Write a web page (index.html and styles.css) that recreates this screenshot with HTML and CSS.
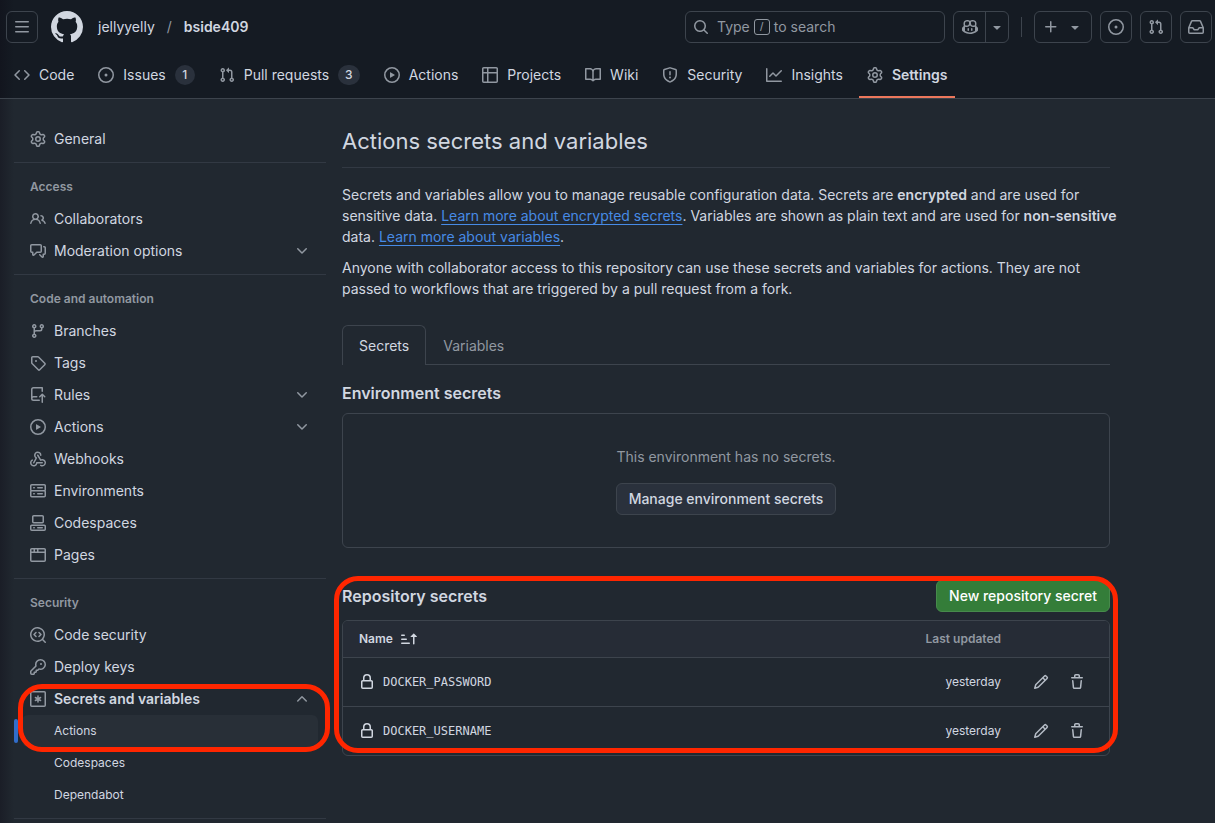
FILE: index.html
```html
<!DOCTYPE html>
<html lang="en">
<head>
    <meta charset="UTF-8">
    <meta name="viewport" content="width=device-width, initial-scale=1.0">
    <title>Actions secrets · jellyyelly/bside409</title>
    <link rel="stylesheet" href="styles.css">
</head>
<body>
    <svg class="sprite" aria-hidden="true">
        <symbol id="i-bars" viewBox="0 0 16 16"><path d="M1 2.75A.75.75 0 0 1 1.75 2h12.5a.75.75 0 0 1 0 1.5H1.75A.75.75 0 0 1 1 2.75Zm0 5A.75.75 0 0 1 1.75 7h12.5a.75.75 0 0 1 0 1.5H1.75A.75.75 0 0 1 1 7.75ZM1.75 12h12.5a.75.75 0 0 1 0 1.5H1.75a.75.75 0 0 1 0-1.5Z"/></symbol>
        <symbol id="i-github" viewBox="0 0 16 16"><path d="M8 0c4.42 0 8 3.58 8 8a8.013 8.013 0 0 1-5.45 7.59c-.4.08-.55-.17-.55-.38 0-.27.01-1.13.01-2.2 0-.75-.25-1.23-.54-1.48 1.78-.2 3.65-.88 3.65-3.95 0-.88-.31-1.59-.82-2.15.08-.2.36-1.02-.08-2.12 0 0-.67-.22-2.2.82-.64-.18-1.32-.27-2-.27-.68 0-1.36.09-2 .27-1.53-1.03-2.2-.82-2.2-.82-.44 1.1-.16 1.92-.08 2.12-.51.56-.82 1.28-.82 2.15 0 3.06 1.86 3.75 3.64 3.95-.23.2-.44.55-.51 1.07-.46.21-1.61.55-2.33-.66-.15-.24-.6-.83-1.23-.82-.67.01-.27.38.01.53.34.19.73.9.82 1.13.16.45.68 1.31 2.69.94 0 .67.01 1.3.01 1.49 0 .21-.15.45-.55.38A7.995 7.995 0 0 1 0 8c0-4.42 3.58-8 8-8Z"/></symbol>
        <symbol id="i-search" viewBox="0 0 16 16"><path d="M10.68 11.74a6 6 0 0 1-7.922-8.982 6 6 0 0 1 8.982 7.922l3.04 3.04a.749.749 0 0 1-.326 1.275.749.749 0 0 1-.734-.215ZM11.5 7a4.499 4.499 0 1 0-8.997 0A4.499 4.499 0 0 0 11.5 7Z"/></symbol>
        <symbol id="i-copilot" viewBox="0 0 16 16"><path d="M7.998 15.035c-4.562 0-7.873-2.914-7.998-3.749V9.338c.085-.628.677-1.686 1.588-2.065.013-.07.024-.143.036-.218.029-.183.06-.384.126-.612-.201-.508-.254-1.084-.254-1.656 0-.87.128-1.769.693-2.484.579-.733 1.494-1.124 2.724-1.261 1.206-.134 2.262.034 2.944.765.05.053.096.108.139.165.044-.057.094-.112.143-.165.682-.731 1.738-.899 2.944-.765 1.23.137 2.145.528 2.724 1.261.566.715.693 1.614.693 2.484 0 .572-.053 1.148-.254 1.656.066.228.098.429.126.612.012.076.024.148.037.218.924.385 1.522 1.471 1.591 2.095v1.872c0 .766-3.351 3.795-8.002 3.795Zm0-1.485c2.28 0 4.584-1.11 5.002-1.433V7.862l-.023-.116c-.49.21-1.075.291-1.727.291-1.146 0-2.059-.327-2.71-.991A3.222 3.222 0 0 1 8 6.303a3.24 3.24 0 0 1-.544.743c-.65.664-1.563.991-2.71.991-.652 0-1.236-.081-1.727-.291l-.023.116v4.255c.419.323 2.722 1.433 5.002 1.433ZM6.762 2.83c-.193-.206-.637-.413-1.682-.297-1.019.113-1.479.404-1.713.7-.247.312-.369.789-.369 1.554 0 .793.129 1.171.308 1.371.162.181.519.379 1.442.379.853 0 1.339-.235 1.638-.54.315-.322.527-.827.617-1.553.117-.935-.037-1.395-.241-1.614Zm4.155-.297c-1.044-.116-1.488.091-1.681.297-.204.219-.359.679-.242 1.614.091.726.303 1.231.618 1.553.299.305.784.54 1.638.54.922 0 1.28-.198 1.442-.379.179-.2.308-.578.308-1.371 0-.765-.123-1.242-.37-1.554-.233-.296-.693-.587-1.713-.7Z"/><path d="M6.25 9.037a.75.75 0 0 1 .75.75v1.501a.75.75 0 0 1-1.5 0V9.787a.75.75 0 0 1 .75-.75Zm4.25.75v1.501a.75.75 0 0 1-1.5 0V9.787a.75.75 0 0 1 1.5 0Z"/></symbol>
        <symbol id="i-triangle" viewBox="0 0 16 16"><path d="m4.427 7.427 3.396 3.396a.25.25 0 0 0 .354 0l3.396-3.396A.25.25 0 0 0 11.396 7H4.604a.25.25 0 0 0-.177.427Z"/></symbol>
        <symbol id="i-plus" viewBox="0 0 16 16"><path d="M7.75 2a.75.75 0 0 1 .75.75V7h4.25a.75.75 0 0 1 0 1.5H8.5v4.25a.75.75 0 0 1-1.5 0V8.5H2.75a.75.75 0 0 1 0-1.5H7V2.75A.75.75 0 0 1 7.75 2Z"/></symbol>
        <symbol id="i-inbox" viewBox="0 0 16 16"><path d="M2.8 2.06A1.75 1.75 0 0 1 4.41 1h7.18c.7 0 1.333.417 1.61 1.06l2.74 6.395c.04.093.06.194.06.295v4.5A1.75 1.75 0 0 1 14.25 15H1.75A1.75 1.75 0 0 1 0 13.25v-4.5c0-.101.02-.202.06-.295Zm1.61.44a.25.25 0 0 0-.23.152L1.887 8H4.75a.75.75 0 0 1 .6.3L6.625 10h2.75l1.275-1.7a.75.75 0 0 1 .6-.3h2.863L11.82 2.652a.25.25 0 0 0-.23-.152Zm10.09 7h-2.875l-1.275 1.7a.75.75 0 0 1-.6.3h-3.5a.75.75 0 0 1-.6-.3L4.375 9.5H1.5v3.75c0 .138.112.25.25.25h12.5a.25.25 0 0 0 .25-.25Z"/></symbol>
        <symbol id="i-code" viewBox="0 0 16 16"><path d="m11.28 3.22 4.25 4.25a.75.75 0 0 1 0 1.06l-4.25 4.25a.749.749 0 0 1-1.275-.326.749.749 0 0 1 .215-.734L13.94 8l-3.72-3.72a.749.749 0 0 1 .326-1.275.749.749 0 0 1 .734.215Zm-6.56 0a.751.751 0 0 1 1.042.018.751.751 0 0 1 .018 1.042L2.06 8l3.72 3.72a.749.749 0 0 1-.326 1.275.749.749 0 0 1-.734-.215L.47 8.53a.75.75 0 0 1 0-1.06Z"/></symbol>
        <symbol id="i-issue" viewBox="0 0 16 16"><path d="M8 9.5a1.5 1.5 0 1 0 0-3 1.5 1.5 0 0 0 0 3Z"/><path d="M8 0a8 8 0 1 1 0 16A8 8 0 0 1 8 0ZM1.5 8a6.5 6.5 0 1 0 13 0 6.5 6.5 0 0 0-13 0Z"/></symbol>
        <symbol id="i-pr" viewBox="0 0 16 16"><path d="M1.5 3.25a2.25 2.25 0 1 1 3 2.122v5.256a2.251 2.251 0 1 1-1.5 0V5.372A2.25 2.25 0 0 1 1.5 3.25Zm5.677-.177L9.573.677A.25.25 0 0 1 10 .854V2.5h1A2.5 2.5 0 0 1 13.5 5v5.628a2.251 2.251 0 1 1-1.5 0V5a1 1 0 0 0-1-1h-1v1.646a.25.25 0 0 1-.427.177L7.177 3.427a.25.25 0 0 1 0-.354ZM3.75 2.5a.75.75 0 1 0 0 1.5.75.75 0 0 0 0-1.5Zm0 9.5a.75.75 0 1 0 0 1.5.75.75 0 0 0 0-1.5Zm8.25.75a.75.75 0 1 0 1.5 0 .75.75 0 0 0-1.5 0Z"/></symbol>
        <symbol id="i-play" viewBox="0 0 16 16"><path d="M8 0a8 8 0 1 1 0 16A8 8 0 0 1 8 0ZM1.5 8a6.5 6.5 0 1 0 13 0 6.5 6.5 0 0 0-13 0Zm4.879-2.773 4.264 2.559a.25.25 0 0 1 0 .428l-4.264 2.559A.25.25 0 0 1 6 10.559V5.442a.25.25 0 0 1 .379-.215Z"/></symbol>
        <symbol id="i-table" viewBox="0 0 16 16"><path d="M0 1.75C0 .784.784 0 1.75 0h12.5C15.216 0 16 .784 16 1.75v12.5A1.75 1.75 0 0 1 14.25 16H1.75A1.75 1.75 0 0 1 0 14.25ZM6.5 6.5v8h7.75a.25.25 0 0 0 .25-.25V6.5Zm8-1.5V1.75a.25.25 0 0 0-.25-.25H6.5V5Zm-13 1.5v7.75c0 .138.112.25.25.25H5v-8ZM5 5V1.5H1.75a.25.25 0 0 0-.25.25V5Z"/></symbol>
        <symbol id="i-book" viewBox="0 0 16 16"><path d="M0 1.75A.75.75 0 0 1 .75 1h4.253c1.227 0 2.317.59 3 1.501A3.743 3.743 0 0 1 11.006 1h4.245a.75.75 0 0 1 .75.75v10.5a.75.75 0 0 1-.75.75h-4.507a2.25 2.25 0 0 0-1.591.659l-.622.621a.75.75 0 0 1-1.06 0l-.622-.621A2.25 2.25 0 0 0 5.258 13H.75a.75.75 0 0 1-.75-.75Zm7.251 10.324.004-5.073-.002-2.253A2.25 2.25 0 0 0 5.003 2.5H1.5v9h3.757a3.75 3.75 0 0 1 1.994.574ZM8.755 4.75l-.004 7.322a3.752 3.752 0 0 1 1.992-.572H14.5v-9h-3.495a2.25 2.25 0 0 0-2.25 2.25Z"/></symbol>
        <symbol id="i-shield" viewBox="0 0 16 16"><path d="M7.467.133a1.748 1.748 0 0 1 1.066 0l5.25 1.68A1.75 1.75 0 0 1 15 3.48V7c0 1.566-.32 3.182-1.303 4.682-.983 1.498-2.585 2.813-5.032 3.855a1.697 1.697 0 0 1-1.33 0c-2.447-1.042-4.049-2.357-5.032-3.855C1.32 10.182 1 8.566 1 7V3.48a1.755 1.755 0 0 1 1.217-1.667Zm.61 1.429a.25.25 0 0 0-.153 0l-5.25 1.68a.25.25 0 0 0-.174.238V7c0 1.358.275 2.666 1.057 3.86.784 1.194 2.121 2.34 4.366 3.297a.196.196 0 0 0 .154 0c2.245-.956 3.582-2.104 4.366-3.298C13.225 9.666 13.5 8.36 13.5 7V3.48a.251.251 0 0 0-.174-.237l-5.25-1.68ZM8.75 4.75v3a.75.75 0 0 1-1.5 0v-3a.75.75 0 0 1 1.5 0ZM9 10.5a1 1 0 1 1-2 0 1 1 0 0 1 2 0Z"/></symbol>
        <symbol id="i-graph" viewBox="0 0 16 16"><path d="M1.5 1.75V13.5h13.75a.75.75 0 0 1 0 1.5H.75a.75.75 0 0 1-.75-.75V1.75a.75.75 0 0 1 1.5 0Zm14.28 2.53-5.25 5.25a.75.75 0 0 1-1.06 0L7 7.06 4.28 9.78a.751.751 0 0 1-1.042-.018.751.751 0 0 1-.018-1.042l3.25-3.25a.75.75 0 0 1 1.06 0L10 7.94l4.72-4.72a.751.751 0 0 1 1.042.018.751.751 0 0 1 .018 1.042Z"/></symbol>
        <symbol id="i-gear" viewBox="0 0 16 16"><path d="M8 0a8.2 8.2 0 0 1 .701.031C9.444.095 9.99.645 10.16 1.29l.288 1.107c.018.066.079.158.212.224.231.114.454.243.668.386.123.082.233.09.299.071l1.103-.303c.644-.176 1.392.021 1.82.63.27.385.506.792.704 1.218.315.675.111 1.422-.364 1.891l-.814.806c-.049.048-.098.147-.088.294.016.257.016.515 0 .772-.01.147.038.246.088.294l.814.806c.475.469.679 1.216.364 1.891a7.977 7.977 0 0 1-.704 1.217c-.428.61-1.176.807-1.82.63l-1.102-.302c-.067-.019-.177-.011-.3.071a5.909 5.909 0 0 1-.668.386c-.133.066-.194.158-.211.224l-.29 1.106c-.168.646-.715 1.196-1.458 1.26a8.006 8.006 0 0 1-1.402 0c-.743-.064-1.289-.614-1.458-1.26l-.289-1.106c-.018-.066-.079-.158-.212-.224a5.738 5.738 0 0 1-.668-.386c-.123-.082-.233-.09-.299-.071l-1.103.303c-.644.176-1.392-.021-1.82-.63a8.12 8.12 0 0 1-.704-1.218c-.315-.675-.111-1.422.363-1.891l.815-.806c.05-.048.098-.147.088-.294a6.214 6.214 0 0 1 0-.772c.01-.147-.038-.246-.088-.294l-.815-.806C.635 6.045.431 5.298.746 4.623a7.92 7.92 0 0 1 .704-1.217c.428-.61 1.176-.807 1.82-.63l1.102.302c.067.019.177.011.3-.071.214-.143.437-.272.668-.386.133-.066.194-.158.211-.224l.29-1.106C6.009.645 6.556.095 7.299.03 7.53.01 7.764 0 8 0Zm-.571 1.525c-.036.003-.108.036-.137.146l-.289 1.105c-.147.561-.549.967-.998 1.189-.173.086-.34.183-.5.29-.417.278-.97.423-1.529.27l-1.103-.303c-.109-.03-.175.016-.195.045-.22.312-.412.644-.573.99-.014.031-.021.11.059.19l.815.806c.411.406.562.957.53 1.456a4.709 4.709 0 0 0 0 .582c.032.499-.119 1.05-.53 1.456l-.815.806c-.081.08-.073.159-.059.19.162.346.353.677.573.989.02.03.085.076.195.046l1.102-.303c.56-.153 1.113-.008 1.53.27.161.107.328.204.501.29.447.222.85.629.997 1.189l.289 1.105c.029.109.101.143.137.146a6.6 6.6 0 0 0 1.142 0c.036-.003.108-.036.137-.146l.289-1.105c.147-.561.549-.967.998-1.189.173-.086.34-.183.5-.29.417-.278.97-.423 1.529-.27l1.103.303c.109.029.175-.016.195-.045.22-.313.411-.644.573-.99.014-.031.021-.11-.059-.19l-.815-.806c-.411-.406-.562-.957-.53-1.456a4.709 4.709 0 0 0 0-.582c-.032-.499.119-1.05.53-1.456l.815-.806c.081-.08.073-.159.059-.19a6.464 6.464 0 0 0-.573-.989c-.02-.03-.085-.076-.195-.046l-1.102.303c-.56.153-1.113.008-1.53-.27a4.44 4.44 0 0 0-.501-.29c-.447-.222-.85-.629-.997-1.189l-.289-1.105c-.029-.11-.101-.143-.137-.146a6.6 6.6 0 0 0-1.142 0ZM11 8a3 3 0 1 1-6 0 3 3 0 0 1 6 0ZM9.5 8a1.5 1.5 0 1 0-3.001.001A1.5 1.5 0 0 0 9.5 8Z"/></symbol>
        <symbol id="i-people" viewBox="0 0 16 16"><path d="M2 5.5a3.5 3.5 0 1 1 5.898 2.549 5.508 5.508 0 0 1 3.034 4.084.75.75 0 1 1-1.482.235 4 4 0 0 0-7.9 0 .75.75 0 0 1-1.482-.236A5.507 5.507 0 0 1 3.102 8.05 3.493 3.493 0 0 1 2 5.5ZM11 4a3.001 3.001 0 0 1 2.22 5.018 5.01 5.01 0 0 1 2.56 3.012.749.749 0 0 1-.885.954.752.752 0 0 1-.549-.514 3.507 3.507 0 0 0-2.522-2.372.75.75 0 0 1-.574-.73v-.352a.75.75 0 0 1 .416-.672A1.5 1.5 0 0 0 11 5.5.75.75 0 0 1 11 4Zm-5.5-.5a2 2 0 1 0-.001 3.999A2 2 0 0 0 5.5 3.5Z"/></symbol>
        <symbol id="i-discussion" viewBox="0 0 16 16"><path d="M1.75 1h8.5c.966 0 1.75.784 1.75 1.75v5.5A1.75 1.75 0 0 1 10.25 10H7.061l-2.574 2.573A1.458 1.458 0 0 1 2 11.543V10h-.25A1.75 1.75 0 0 1 0 8.25v-5.5C0 1.784.784 1 1.75 1ZM1.5 2.75v5.5c0 .138.112.25.25.25h1a.75.75 0 0 1 .75.75v2.19l2.72-2.72a.749.749 0 0 1 .53-.22h3.5a.25.25 0 0 0 .25-.25v-5.5a.25.25 0 0 0-.25-.25h-8.5a.25.25 0 0 0-.25.25Zm13 2a.25.25 0 0 0-.25-.25h-.5a.75.75 0 0 1 0-1.5h.5c.966 0 1.75.784 1.75 1.75v5.5A1.75 1.75 0 0 1 14.25 12H14v1.543a1.458 1.458 0 0 1-2.487 1.03L9.22 12.28a.749.749 0 0 1 .326-1.275.749.749 0 0 1 .734.215l2.22 2.22v-2.19a.75.75 0 0 1 .75-.75h1a.25.25 0 0 0 .25-.25Z"/></symbol>
        <symbol id="i-branch" viewBox="0 0 16 16"><path d="M9.5 3.25a2.25 2.25 0 1 1 3 2.122V6A2.5 2.5 0 0 1 10 8.5H6a1 1 0 0 0-1 1v1.128a2.251 2.251 0 1 1-1.5 0V5.372a2.25 2.25 0 1 1 1.5 0v1.836A2.493 2.493 0 0 1 6 7h4a1 1 0 0 0 1-1v-.628A2.25 2.25 0 0 1 9.5 3.25Zm-6 0a.75.75 0 1 0 1.5 0 .75.75 0 0 0-1.5 0Zm8.25-.75a.75.75 0 1 0 0 1.5.75.75 0 0 0 0-1.5ZM4.25 12a.75.75 0 1 0 0 1.5.75.75 0 0 0 0-1.5Z"/></symbol>
        <symbol id="i-tag" viewBox="0 0 16 16"><path d="M1 7.775V2.75C1 1.784 1.784 1 2.75 1h5.025c.464 0 .91.184 1.238.513l6.25 6.25a1.75 1.75 0 0 1 0 2.474l-5.026 5.026a1.75 1.75 0 0 1-2.474 0l-6.25-6.25A1.752 1.752 0 0 1 1 7.775Zm1.5 0c0 .066.026.13.073.177l6.25 6.25a.25.25 0 0 0 .354 0l5.025-5.025a.25.25 0 0 0 0-.354l-6.25-6.25a.25.25 0 0 0-.177-.073H2.75a.25.25 0 0 0-.25.25ZM6 5a1 1 0 1 1 0 2 1 1 0 0 1 0-2Z"/></symbol>
        <symbol id="i-rules" viewBox="0 0 16 16"><path d="M1 2.5A2.5 2.5 0 0 1 3.5 0h8.75a.75.75 0 0 1 .75.75v3.5a.75.75 0 0 1-1.5 0V1.5h-8a1 1 0 0 0-1 1v6.708A2.493 2.493 0 0 1 3.5 9h3.25a.75.75 0 0 1 0 1.5H3.5a1 1 0 0 0 0 2h5.75a.75.75 0 0 1 0 1.5H3.5A2.5 2.5 0 0 1 1 11.5Zm13.23 7.79h-.001l-1.224-1.224v6.184a.75.75 0 0 1-1.5 0V9.066L10.28 10.29a.75.75 0 0 1-1.06-1.061l2.505-2.504a.75.75 0 0 1 1.06 0L15.29 9.23a.751.751 0 0 1-.018 1.042.751.751 0 0 1-1.042.018Z"/></symbol>
        <symbol id="i-webhook" viewBox="0 0 16 16"><path d="M5.5 4.25a2.25 2.25 0 0 1 4.5 0 .75.75 0 0 0 1.5 0 3.75 3.75 0 1 0-6.14 2.889l-2.272 4.258a.75.75 0 0 0 1.324.706L7 7.25a.75.75 0 0 0-.309-1.015A2.25 2.25 0 0 1 5.5 4.25Z"/><path d="M7.364 3.607a.75.75 0 0 1 1.03.257l2.608 4.349a3.75 3.75 0 1 1-.628 6.785.75.75 0 0 1 .752-1.299 2.25 2.25 0 1 0-.033-3.88.75.75 0 0 1-1.03-.256L7.107 4.636a.75.75 0 0 1 .257-1.03Z"/><path d="M2.9 8.776A.75.75 0 0 1 2.625 9.8 2.25 2.25 0 1 0 6 11.75a.75.75 0 0 1 .75-.751h5.5a.75.75 0 0 1 0 1.5H7.425a3.751 3.751 0 1 1-5.55-3.998.75.75 0 0 1 1.024.274Z"/></symbol>
        <symbol id="i-server" viewBox="0 0 16 16"><path d="M1.75 1h12.5c.966 0 1.75.784 1.75 1.75v4c0 .372-.116.717-.314 1 .198.283.314.628.314 1v4a1.75 1.75 0 0 1-1.75 1.75H1.75A1.75 1.75 0 0 1 0 12.75v-4c0-.358.109-.707.314-1a1.739 1.739 0 0 1-.314-1v-4C0 1.784.784 1 1.75 1ZM1.5 2.75v4c0 .138.112.25.25.25h12.5a.25.25 0 0 0 .25-.25v-4a.25.25 0 0 0-.25-.25H1.75a.25.25 0 0 0-.25.25Zm.25 5.75a.25.25 0 0 0-.25.25v4c0 .138.112.25.25.25h12.5a.25.25 0 0 0 .25-.25v-4a.25.25 0 0 0-.25-.25ZM7 4.75A.75.75 0 0 1 7.75 4h4.5a.75.75 0 0 1 0 1.5h-4.5A.75.75 0 0 1 7 4.75ZM7.75 10h4.5a.75.75 0 0 1 0 1.5h-4.5a.75.75 0 0 1 0-1.5ZM3 4.75A.75.75 0 0 1 3.75 4h.5a.75.75 0 0 1 0 1.5h-.5A.75.75 0 0 1 3 4.75ZM3.75 10h.5a.75.75 0 0 1 0 1.5h-.5a.75.75 0 0 1 0-1.5Z"/></symbol>
        <symbol id="i-codespaces" viewBox="0 0 16 16"><path d="M0 11.25c0-.966.784-1.75 1.75-1.75h12.5c.966 0 1.75.784 1.75 1.75v3A1.75 1.75 0 0 1 14.25 16H1.75A1.75 1.75 0 0 1 0 14.25Zm2-9.5C2 .784 2.784 0 3.75 0h8.5C13.216 0 14 .784 14 1.75v5a1.75 1.75 0 0 1-1.75 1.75h-8.5A1.75 1.75 0 0 1 2 6.75Zm1.75-.25a.25.25 0 0 0-.25.25v5c0 .138.112.25.25.25h8.5a.25.25 0 0 0 .25-.25v-5a.25.25 0 0 0-.25-.25Zm-2 9.5a.25.25 0 0 0-.25.25v3c0 .138.112.25.25.25h12.5a.25.25 0 0 0 .25-.25v-3a.25.25 0 0 0-.25-.25Z"/><path d="M7 12.75a.75.75 0 0 1 .75-.75h4.5a.75.75 0 0 1 0 1.5h-4.5a.75.75 0 0 1-.75-.75Zm-4 0a.75.75 0 0 1 .75-.75h.5a.75.75 0 0 1 0 1.5h-.5a.75.75 0 0 1-.75-.75Z"/></symbol>
        <symbol id="i-browser" viewBox="0 0 16 16"><path d="M0 2.75C0 1.784.784 1 1.75 1h12.5c.966 0 1.75.784 1.75 1.75v10.5A1.75 1.75 0 0 1 14.25 15H1.75A1.75 1.75 0 0 1 0 13.25ZM14.5 6h-13v7.25c0 .138.112.25.25.25h12.5a.25.25 0 0 0 .25-.25Zm-6-3.5v2h6V2.75a.25.25 0 0 0-.25-.25ZM5 2.5v2h2v-2Zm-3.25 0a.25.25 0 0 0-.25.25V4.5h2v-2Z"/></symbol>
        <symbol id="i-codescan" viewBox="0 0 16 16"><path d="M8.47 4.97a.75.75 0 0 0 0 1.06L9.94 7.5 8.47 8.97a.75.75 0 1 0 1.06 1.06l2-2a.75.75 0 0 0 0-1.06l-2-2a.75.75 0 0 0-1.06 0ZM6.53 6.03a.75.75 0 0 0-1.06-1.06l-2 2a.75.75 0 0 0 0 1.06l2 2a.75.75 0 1 0 1.06-1.06L5.06 7.5l1.47-1.47Z"/><path d="M12.246 13.307a7.501 7.501 0 1 1 1.06-1.06l2.474 2.473a.749.749 0 0 1-.326 1.275.749.749 0 0 1-.734-.215ZM1.5 7.5a6.002 6.002 0 0 0 3.608 5.504 6.002 6.002 0 0 0 6.486-1.117.748.748 0 0 1 .292-.293A6 6 0 1 0 1.5 7.5Z"/></symbol>
        <symbol id="i-key" viewBox="0 0 16 16"><path d="M10.5 0a5.499 5.499 0 1 1-1.288 10.848l-.932.932a.749.749 0 0 1-.53.22H7v.75a.749.749 0 0 1-.22.53l-.5.5a.749.749 0 0 1-.53.22H5v.75a.749.749 0 0 1-.22.53l-.5.5a.749.749 0 0 1-.53.22h-2A1.75 1.75 0 0 1 0 14.25v-2c0-.199.079-.389.22-.53l4.932-4.932A5.5 5.5 0 0 1 10.5 0Zm-4 5.5c-.001.431.069.86.205 1.269a.75.75 0 0 1-.181.768L1.5 12.56v1.69c0 .138.112.25.25.25h1.69l.06-.06v-1.19a.75.75 0 0 1 .75-.75h1.19l.06-.06v-1.19a.75.75 0 0 1 .75-.75h1.19l1.023-1.025a.75.75 0 0 1 .768-.18A4 4 0 1 0 6.5 5.5ZM11 6a1 1 0 1 1 0-2 1 1 0 0 1 0 2Z"/></symbol>
        <symbol id="i-asterisk" viewBox="0 0 16 16"><g fill="none" stroke="currentColor" stroke-width="1.5" stroke-linecap="round"><rect x=".75" y=".75" width="14.5" height="14.5" rx="1"/><path d="M8 5v6M5.4 6.5l5.2 3M10.6 6.5l-5.2 3"/></g></symbol>
        <symbol id="i-down" viewBox="0 0 16 16"><path d="M12.78 5.22a.749.749 0 0 1 0 1.06l-4.25 4.25a.749.749 0 0 1-1.06 0L3.22 6.28a.749.749 0 1 1 1.06-1.06L8 8.939l3.72-3.719a.749.749 0 0 1 1.06 0Z"/></symbol>
        <symbol id="i-up" viewBox="0 0 16 16"><path d="M3.22 10.53a.749.749 0 0 1 0-1.06l4.25-4.25a.749.749 0 0 1 1.06 0l4.25 4.25a.749.749 0 1 1-1.06 1.06L8 6.811 4.28 10.53a.749.749 0 0 1-1.06 0Z"/></symbol>
        <symbol id="i-sort" viewBox="0 0 16 16"><path d="m12.927 2.573 3 3A.25.25 0 0 1 15.75 6H13.5v6.75a.75.75 0 0 1-1.5 0V6H9.75a.25.25 0 0 1-.177-.427l3-3a.25.25 0 0 1 .354 0ZM0 12.25a.75.75 0 0 1 .75-.75h7.5a.75.75 0 0 1 0 1.5H.75a.75.75 0 0 1-.75-.75Zm0-4a.75.75 0 0 1 .75-.75h4.5a.75.75 0 0 1 0 1.5H.75A.75.75 0 0 1 0 8.25Zm0-4a.75.75 0 0 1 .75-.75h2.5a.75.75 0 0 1 0 1.5H.75A.75.75 0 0 1 0 4.25Z"/></symbol>
        <symbol id="i-lock" viewBox="0 0 16 16"><path d="M4 4a4 4 0 0 1 8 0v2h.25c.966 0 1.75.784 1.75 1.75v5.5A1.75 1.75 0 0 1 12.25 15h-8.5A1.75 1.75 0 0 1 2 13.25v-5.5C2 6.784 2.784 6 3.75 6H4Zm8.25 3.5h-8.5a.25.25 0 0 0-.25.25v5.5c0 .138.112.25.25.25h8.5a.25.25 0 0 0 .25-.25v-5.5a.25.25 0 0 0-.25-.25ZM10.5 6V4a2.5 2.5 0 1 0-5 0v2Z"/></symbol>
        <symbol id="i-pencil" viewBox="0 0 16 16"><path d="M11.013 1.427a1.75 1.75 0 0 1 2.474 0l1.086 1.086a1.75 1.75 0 0 1 0 2.474l-8.61 8.61c-.21.21-.47.364-.756.445l-3.251.93a.75.75 0 0 1-.927-.928l.929-3.25c.081-.286.235-.547.445-.758l8.61-8.61Zm.176 4.823L9.75 4.81l-6.286 6.287a.253.253 0 0 0-.064.108l-.558 1.953 1.953-.558a.253.253 0 0 0 .108-.064Zm1.238-3.763a.25.25 0 0 0-.354 0L10.811 3.75l1.439 1.44 1.263-1.263a.25.25 0 0 0 0-.354Z"/></symbol>
        <symbol id="i-trash" viewBox="0 0 16 16"><path d="M11 1.75V3h2.25a.75.75 0 0 1 0 1.5H2.75a.75.75 0 0 1 0-1.5H5V1.75C5 .784 5.784 0 6.75 0h2.5C10.216 0 11 .784 11 1.75ZM4.496 6.675l.66 6.6a.25.25 0 0 0 .249.225h5.19a.25.25 0 0 0 .249-.225l.66-6.6a.75.75 0 0 1 1.492.149l-.66 6.6A1.748 1.748 0 0 1 10.595 15h-5.19a1.75 1.75 0 0 1-1.741-1.575l-.66-6.6a.75.75 0 1 1 1.492-.15ZM6.5 1.75V3h3V1.75a.25.25 0 0 0-.25-.25h-2.5a.25.25 0 0 0-.25.25Z"/></symbol>
    </svg>

    <header class="header">
        <div class="header-bar">
            <button type="button" class="header-button" aria-label="Open menu"><svg class="icon"><use href="#i-bars"/></svg></button>
            <a href="#" class="logo" aria-label="Homepage"><svg class="logo-mark"><use href="#i-github"/></svg></a>
            <nav class="crumbs" aria-label="Breadcrumbs">
                <a href="#">jellyyelly</a>
                <span class="crumb-slash">/</span>
                <a href="#" class="crumb-current">bside409</a>
            </nav>
            <div class="header-actions">
                <button type="button" class="search">
                    <svg class="icon"><use href="#i-search"/></svg>
                    <span class="search-text">Type <kbd>/</kbd> to search</span>
                </button>
                <div class="split-button">
                    <button type="button" aria-label="Chat with Copilot"><svg class="icon"><use href="#i-copilot"/></svg></button>
                    <button type="button" class="split-caret" aria-label="Open Copilot menu"><svg class="icon"><use href="#i-triangle"/></svg></button>
                </div>
                <span class="header-divider"></span>
                <button type="button" class="header-button create-button" aria-label="Create new"><svg class="icon"><use href="#i-plus"/></svg><svg class="icon"><use href="#i-triangle"/></svg></button>
                <a href="#" class="header-button" aria-label="Your issues"><svg class="icon"><use href="#i-issue"/></svg></a>
                <a href="#" class="header-button" aria-label="Your pull requests"><svg class="icon"><use href="#i-pr"/></svg></a>
                <a href="#" class="header-button" aria-label="Notifications"><svg class="icon"><use href="#i-inbox"/></svg></a>
            </div>
        </div>
        <nav class="repo-nav" aria-label="Repository">
            <a href="#"><svg class="icon"><use href="#i-code"/></svg>Code</a>
            <a href="#"><svg class="icon"><use href="#i-issue"/></svg>Issues <span class="counter">1</span></a>
            <a href="#"><svg class="icon"><use href="#i-pr"/></svg>Pull requests <span class="counter">3</span></a>
            <a href="#"><svg class="icon"><use href="#i-play"/></svg>Actions</a>
            <a href="#"><svg class="icon"><use href="#i-table"/></svg>Projects</a>
            <a href="#"><svg class="icon"><use href="#i-book"/></svg>Wiki</a>
            <a href="#"><svg class="icon"><use href="#i-shield"/></svg>Security</a>
            <a href="#"><svg class="icon"><use href="#i-graph"/></svg>Insights</a>
            <a href="#" class="selected" aria-current="page"><svg class="icon"><use href="#i-gear"/></svg>Settings</a>
        </nav>
    </header>

    <div class="layout">
        <nav class="sidebar" aria-label="Settings">
            <div class="group">
                <a href="#" class="item"><svg class="icon"><use href="#i-gear"/></svg>General</a>
            </div>
            <div class="group">
                <h3>Access</h3>
                <a href="#" class="item"><svg class="icon"><use href="#i-people"/></svg>Collaborators</a>
                <button type="button" class="item"><svg class="icon"><use href="#i-discussion"/></svg>Moderation options<svg class="icon chevron"><use href="#i-down"/></svg></button>
            </div>
            <div class="group">
                <h3>Code and automation</h3>
                <a href="#" class="item"><svg class="icon"><use href="#i-branch"/></svg>Branches</a>
                <a href="#" class="item"><svg class="icon"><use href="#i-tag"/></svg>Tags</a>
                <button type="button" class="item"><svg class="icon"><use href="#i-rules"/></svg>Rules<svg class="icon chevron"><use href="#i-down"/></svg></button>
                <button type="button" class="item"><svg class="icon"><use href="#i-play"/></svg>Actions<svg class="icon chevron"><use href="#i-down"/></svg></button>
                <a href="#" class="item"><svg class="icon"><use href="#i-webhook"/></svg>Webhooks</a>
                <a href="#" class="item"><svg class="icon"><use href="#i-server"/></svg>Environments</a>
                <a href="#" class="item"><svg class="icon"><use href="#i-codespaces"/></svg>Codespaces</a>
                <a href="#" class="item"><svg class="icon"><use href="#i-browser"/></svg>Pages</a>
            </div>
            <div class="group">
                <h3>Security</h3>
                <a href="#" class="item"><svg class="icon"><use href="#i-codescan"/></svg>Code security</a>
                <a href="#" class="item"><svg class="icon"><use href="#i-key"/></svg>Deploy keys</a>
                <div class="marked">
                    <button type="button" class="item item-open"><svg class="icon"><use href="#i-asterisk"/></svg>Secrets and variables<svg class="icon chevron"><use href="#i-up"/></svg></button>
                    <a href="#" class="item sub-item active" aria-current="page">Actions</a>
                    <div class="mark mark-sidebar"></div>
                </div>
                <a href="#" class="item sub-item">Codespaces</a>
                <a href="#" class="item sub-item">Dependabot</a>
            </div>
            <div class="group"></div>
        </nav>

        <main class="content">
            <h1>Actions secrets and variables</h1>
            <div class="intro">
                <p>Secrets and variables allow you to manage reusable configuration data. Secrets are <strong>encrypted</strong> and are used for sensitive data. <a href="#">Learn more about encrypted secrets</a>. Variables are shown as plain text and are used for <strong>non-sensitive</strong> data. <a href="#">Learn more about variables</a>.</p>
                <p>Anyone with collaborator access to this repository can use these secrets and variables for actions. They are not passed to workflows that are triggered by a pull request from a fork.</p>
            </div>
            <nav class="tabs" aria-label="Secrets and variables">
                <a href="#" class="tab selected" aria-current="page">Secrets</a>
                <a href="#" class="tab">Variables</a>
            </nav>

            <section>
                <h2>Environment secrets</h2>
                <div class="blankslate">
                    <p>This environment has no secrets.</p>
                    <button type="button" class="btn">Manage environment secrets</button>
                </div>
            </section>

            <section class="marked repo-secrets">
                <div class="section-head">
                    <h2>Repository secrets</h2>
                    <a href="#" class="btn btn-primary">New repository secret</a>
                </div>
                <div class="table-box">
                    <table>
                        <thead>
                            <tr>
                                <th class="col-name"><button type="button" class="sort">Name<svg class="icon"><use href="#i-sort"/></svg></button></th>
                                <th class="col-date">Last updated</th>
                                <th class="col-actions"></th>
                            </tr>
                        </thead>
                        <tbody>
                            <tr>
                                <td class="col-name"><div class="secret"><svg class="icon"><use href="#i-lock"/></svg><code>DOCKER_PASSWORD</code></div></td>
                                <td class="col-date">yesterday</td>
                                <td class="col-actions">
                                    <div class="row-actions">
                                        <button type="button" aria-label="Edit DOCKER_PASSWORD"><svg class="icon"><use href="#i-pencil"/></svg></button>
                                        <button type="button" aria-label="Remove DOCKER_PASSWORD"><svg class="icon"><use href="#i-trash"/></svg></button>
                                    </div>
                                </td>
                            </tr>
                            <tr>
                                <td class="col-name"><div class="secret"><svg class="icon"><use href="#i-lock"/></svg><code>DOCKER_USERNAME</code></div></td>
                                <td class="col-date">yesterday</td>
                                <td class="col-actions">
                                    <div class="row-actions">
                                        <button type="button" aria-label="Edit DOCKER_USERNAME"><svg class="icon"><use href="#i-pencil"/></svg></button>
                                        <button type="button" aria-label="Remove DOCKER_USERNAME"><svg class="icon"><use href="#i-trash"/></svg></button>
                                    </div>
                                </td>
                            </tr>
                        </tbody>
                    </table>
                </div>
                <div class="mark mark-table"></div>
            </section>
        </main>
    </div>
</body>
</html>
```

FILE: styles.css
```css
* {
    box-sizing: border-box;
}
body {
    margin: 0;
    min-height: 100vh;
    font-family: Inter, "Liberation Sans", sans-serif;
    font-size: 14px;
    line-height: 20px;
    color: #d1d7e0;
    background: #212830 linear-gradient(to right, rgba(20, 20, 30, 0.5), transparent 14px);
}
a {
    color: inherit;
    text-decoration: none;
}
button {
    margin: 0;
    padding: 0;
    font: inherit;
    color: inherit;
    background: none;
    border: none;
    cursor: pointer;
}
h1, h2, h3, p {
    margin: 0;
}
.sprite {
    display: none;
}
.icon {
    width: 16px;
    height: 16px;
    flex-shrink: 0;
    fill: currentColor;
    color: #9198a1;
}

/* header */
.header {
    background: #151b23 linear-gradient(to right, rgba(15, 15, 25, 0.5), transparent 14px);
    border-bottom: 1px solid #3d444d;
}
.header-bar {
    display: flex;
    align-items: center;
    padding: 11px 3px 11px 6px;
}
.header-button {
    display: flex;
    align-items: center;
    justify-content: center;
    width: 32px;
    height: 32px;
    border: 1px solid #3d444d;
    border-radius: 6px;
}
.create-button {
    width: 58px;
    gap: 8px;
}
.logo {
    display: flex;
    margin: 0 8px 0 13px;
}
.logo-mark {
    width: 32px;
    height: 32px;
    fill: #d1d7e0;
}
.crumbs {
    display: flex;
    padding-left: 7px;
    gap: 12px;
}
.crumb-slash {
    color: #9198a1;
}
.crumb-current {
    font-weight: 600;
}
.header-actions {
    display: flex;
    align-items: center;
    gap: 8px;
    margin-left: auto;
}
.search {
    display: flex;
    align-items: center;
    gap: 8px;
    width: 260px;
    height: 32px;
    padding: 0 7px;
    color: #9198a1;
    border: 1px solid #3d444d;
    border-radius: 6px;
}
.search-text {
    display: flex;
    align-items: center;
    gap: 4px;
}
.search kbd {
    width: 16px;
    height: 16px;
    font: 12px/14px "Liberation Sans", sans-serif;
    text-align: center;
    border: 1px solid #9198a1;
    border-radius: 3px;
}
.split-button {
    display: flex;
    height: 32px;
    border: 1px solid #3d444d;
    border-radius: 6px;
}
.split-button button {
    display: flex;
    align-items: center;
    justify-content: center;
    width: 31px;
}
.split-button .split-caret {
    width: 23px;
    border-left: 1px solid #3d444d;
}
.header-divider {
    width: 1px;
    height: 20px;
    margin: 0 4px;
    background: #3d444d;
}
.repo-nav {
    display: flex;
    gap: 8px;
    padding: 0 6px;
}
.repo-nav a {
    display: flex;
    align-items: center;
    gap: 9px;
    height: 44px;
    padding: 0 8px 2px;
    white-space: nowrap;
}
.repo-nav .selected {
    padding-bottom: 0;
    font-weight: 600;
    border-bottom: 2px solid #ec775c;
}
.counter {
    min-width: 20px;
    height: 20px;
    padding: 0 7px;
    font-size: 12px;
    line-height: 20px;
    font-weight: 500;
    text-align: center;
    background: #2a313c;
    border-radius: 10px;
}

/* page columns */
.layout {
    display: flex;
    gap: 16px;
    padding: 0 16px 0 14px;
}
.sidebar {
    width: 312px;
    flex-shrink: 0;
    padding-top: 24px;
}
.group + .group {
    margin-top: 7px;
    padding-top: 8px;
    border-top: 1px solid #323943;
}
.group:empty {
    padding: 0;
}
.group h3 {
    padding: 0 16px;
    font-size: 12px;
    line-height: 32px;
    font-weight: 600;
    color: #9198a1;
}
.item {
    display: flex;
    align-items: center;
    gap: 8px;
    width: 100%;
    height: 32px;
    padding: 0 16px;
    text-align: left;
}
.item-open {
    font-weight: 600;
}
.chevron {
    margin-left: auto;
}
.sub-item {
    padding-left: 40px;
    font-size: 12px;
}
.active {
    position: relative;
    width: auto;
    margin: 0 8px;
    padding-left: 32px;
    background: #282f37;
    border-radius: 6px;
}
.active::before {
    content: "";
    position: absolute;
    top: 4px;
    left: -8px;
    width: 4px;
    height: 24px;
    background: #316dca;
    border-radius: 2px;
}

/* red highlight frames */
.marked {
    position: relative;
}
.mark {
    position: absolute;
    border: 5px solid #ff2600;
    border-radius: 24px;
    pointer-events: none;
}
.mark-sidebar {
    inset: 1px -4px -5px 4px;
}
.mark-table {
    inset: -4px -8px 3px -8px;
}

/* content */
.content {
    flex: 1;
    max-width: 768px;
    padding-top: 25px;
}
h1 {
    padding-bottom: 8px;
    font-size: 22px;
    line-height: 35px;
    font-weight: 400;
    border-bottom: 1px solid #323943;
}
h2 {
    font-size: 16px;
    line-height: 24px;
    font-weight: 600;
}
.intro {
    display: flex;
    flex-direction: column;
    gap: 10px;
    margin-right: -12px;
    padding: 16px 0 26px;
    line-height: 21px;
}
.intro strong {
    font-weight: 600;
    white-space: nowrap;
}
.intro a {
    color: #478be6;
    text-decoration: underline;
    text-underline-offset: 3px;
}
.tabs {
    display: flex;
    margin-bottom: 16px;
    border-bottom: 1px solid #3d444d;
}
.tab {
    height: 40px;
    margin-bottom: -1px;
    padding: 0 16px;
    line-height: 40px;
    color: #9198a1;
    border: 1px solid transparent;
    border-bottom: none;
    border-radius: 6px 6px 0 0;
}
.tab.selected {
    color: #d1d7e0;
    background: #212830;
    border-color: #3d444d;
}
.blankslate {
    display: flex;
    flex-direction: column;
    align-items: center;
    gap: 16px;
    margin-top: 8px;
    padding: 32px;
    line-height: 21px;
    color: #9198a1;
    border: 1px solid #3d444d;
    border-radius: 6px;
}
.btn {
    height: 32px;
    padding: 0 12px;
    line-height: 30px;
    font-weight: 500;
    color: #d1d7e0;
    background: #2a313c;
    border: 1px solid #3d444d;
    border-radius: 6px;
    white-space: nowrap;
}
.btn-primary {
    color: #fff;
    background: #347d39;
    border-color: #478a4c;
}
.repo-secrets {
    margin-top: 32px;
}
.section-head {
    display: flex;
    align-items: center;
    justify-content: space-between;
    margin-bottom: 8px;
}
.table-box {
    overflow: hidden;
    border: 1px solid #3d444d;
    border-radius: 6px;
}
table {
    width: 100%;
    border-collapse: separate;
    border-spacing: 0;
    font-size: 12px;
}
th {
    height: 36px;
    padding: 0;
    font-weight: 600;
    color: #9198a1;
    background: #262c36;
}
td {
    height: 49px;
    padding: 0;
    border-top: 1px solid #3d444d;
}
.col-name {
    padding-left: 16px;
    text-align: left;
}
.col-date {
    padding-right: 24px;
    text-align: right;
}
.col-actions {
    width: 84px;
    padding-right: 16px;
}
.sort {
    display: flex;
    align-items: center;
    gap: 8px;
    color: #d1d7e0;
}
.sort .icon, .secret .icon {
    color: #d1d7e0;
}
.secret {
    display: flex;
    align-items: center;
    gap: 8px;
}
code {
    font-family: "DejaVu Sans Mono", monospace;
    font-size: 12px;
}
.row-actions {
    display: flex;
    gap: 4px;
}
.row-actions button {
    display: flex;
    align-items: center;
    justify-content: center;
    width: 32px;
    height: 32px;
}
.row-actions .icon {
    color: #b3bac4;
}
```
